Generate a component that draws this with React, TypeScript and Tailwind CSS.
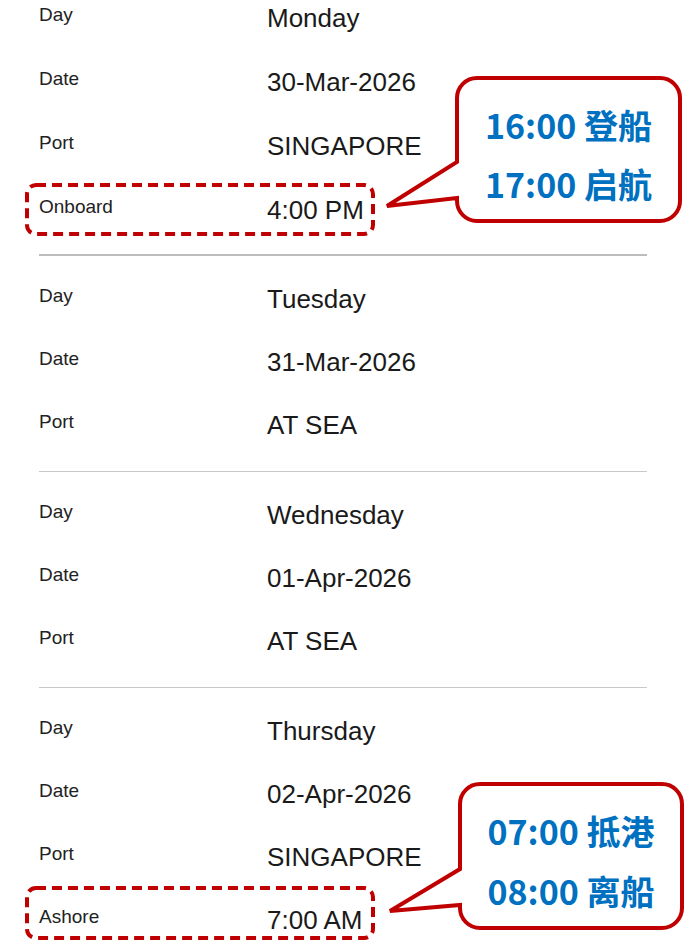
import React from 'react'

type Row = { label: string; value: string }

const groups: Row[][] = [
  [
    { label: 'Day', value: 'Monday' },
    { label: 'Date', value: '30-Mar-2026' },
    { label: 'Port', value: 'SINGAPORE' },
    { label: 'Onboard', value: '4:00 PM' },
  ],
  [
    { label: 'Day', value: 'Tuesday' },
    { label: 'Date', value: '31-Mar-2026' },
    { label: 'Port', value: 'AT SEA' },
  ],
  [
    { label: 'Day', value: 'Wednesday' },
    { label: 'Date', value: '01-Apr-2026' },
    { label: 'Port', value: 'AT SEA' },
  ],
  [
    { label: 'Day', value: 'Thursday' },
    { label: 'Date', value: '02-Apr-2026' },
    { label: 'Port', value: 'SINGAPORE' },
    { label: 'Ashore', value: '7:00 AM' },
  ],
]

const callouts = [
  { left: 455, width: 227, lines: [{ y: 125, text: '16:00 登船' }, { y: 184, text: '17:00 启航' }] },
  { left: 458, width: 226, lines: [{ y: 831, text: '07:00 抵港' }, { y: 891, text: '08:00 离船' }] },
]

function Annotations() {
  const red = '#c00000'
  return (
    <svg className="pointer-events-none absolute left-0 top-0" width="696" height="941" viewBox="0 0 696 941" fill="none">
      {/* dashed highlight boxes */}
      <rect x="27" y="185" width="346" height="49" rx="9" stroke={red} strokeWidth="4" strokeDasharray="10 6" />
      <rect x="27" y="888" width="346" height="50" rx="9" stroke={red} strokeWidth="4" strokeDasharray="10 6" />
      {/* speech bubbles */}
      <path
        d="M477 78 H660 A20 20 0 0 1 680 98 V201 A20 20 0 0 1 660 221 H477 A20 20 0 0 1 457 201 V198 L387 206 L457 162 V98 A20 20 0 0 1 477 78 Z"
        fill="white"
        stroke={red}
        strokeWidth="4"
      />
      <path
        d="M480 784 H662 A20 20 0 0 1 682 804 V908 A20 20 0 0 1 662 928 H480 A20 20 0 0 1 460 908 V905 L390 911 L460 869 V804 A20 20 0 0 1 480 784 Z"
        fill="white"
        stroke={red}
        strokeWidth="4"
      />
    </svg>
  )
}

export default function App() {
  return (
    <div className="relative h-[941px] w-[696px] overflow-hidden bg-white" style={{ fontFamily: '"Liberation Sans", Arial, sans-serif' }}>
      <div className="-mt-[26px] ml-[39px] w-[608px]">
        {groups.map((rows, gi) => (
          <div
            key={gi}
            className={
              gi === 0
                ? 'py-3'
                : gi === 1
                ? 'border-t-2 border-[#bdbdbd] pt-3 pb-[14px]'
                : 'border-t border-[#c8c8c8] pt-3 pb-[14px]'
            }
          >
            {rows.map((row, ri) => (
              <div key={ri} className={gi === 0 ? 'flex h-16 items-center' : 'flex h-[63px] items-center'}>
                <div className="w-[228px] pb-[6px] text-[19px] text-[#222]">{row.label}</div>
                <div className="text-[26px] text-[#1a1a1a]">{row.value}</div>
              </div>
            ))}
          </div>
        ))}
      </div>

      <Annotations />

      {callouts.map((c, i) => (
        <div key={i}>
          {c.lines.map((l, li) => (
            <div
              key={li}
              className="absolute flex h-[40px] items-center justify-center text-[34px] font-bold leading-none text-[#0070c0]"
              style={{ left: c.left, width: c.width, top: l.y - 20, fontFamily: '"Noto Sans CJK SC", "Noto Sans", sans-serif' }}
            >
              {l.text}
            </div>
          ))}
        </div>
      ))}
    </div>
  )
}
